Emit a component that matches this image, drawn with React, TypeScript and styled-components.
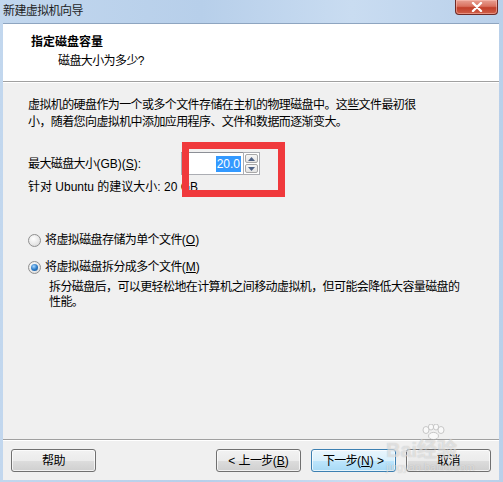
import React from "react";
import styled, { createGlobalStyle } from "styled-components";

const Global = createGlobalStyle`
  html, body { margin: 0; padding: 0; }
  body {
    font-family: "Liberation Sans", "Noto Sans CJK SC", sans-serif;
    font-size: 12px;
    color: #000;
  }
`;

const Window = styled.div`
  position: relative;
  width: 503px;
  height: 482px;
  box-sizing: border-box;
  display: flex;
  flex-direction: column;
  background: linear-gradient(90deg, #c2d7ee 0%, #b7cfea 40%, #c9dcf1 70%, #b9d0ea 100%);
  padding: 0 4px 2px 3px;
  overflow: hidden;
  letter-spacing: -0.6px;
  white-space: nowrap;
`;

const TitleBar = styled.div`
  height: 23px;
  display: flex;
  align-items: flex-start;
  justify-content: space-between;
  margin-right: -4px;
`;

const Title = styled.div`
  line-height: 20px;
  font-size: 12px;
  color: #1e1e1e;
  padding-top: 1px;
`;

const CloseButton = styled.div`
  width: 43px;
  height: 15px;
  margin-right: 5px;
  box-sizing: border-box;
  border: 1px solid #6e2a26;
  border-top: none;
  border-radius: 0 0 4px 4px;
  background: linear-gradient(180deg, #e8a093 0%, #d9715f 45%, #c13f2a 55%, #d0604a 100%);
  display: flex;
  align-items: center;
  justify-content: center;
  box-shadow: inset 0 0 0 1px rgba(255, 200, 190, 0.5);
`;

const Client = styled.div`
  flex: 1;
  display: flex;
  flex-direction: column;
  background: #f0f0f0;
  border-top: 1px solid #8ea5c0;
`;

const Header = styled.div`
  height: 58px;
  box-sizing: border-box;
  background: #fff;
  border-bottom: 1px solid #a0a0a0;
  box-shadow: 0 1px 0 #ffffff;
  padding: 10px 0 0 28px;
  display: flex;
  flex-direction: column;
  gap: 3px;
`;

const HeaderTitle = styled.div`
  font-weight: bold;
  line-height: 16px;
  letter-spacing: 0;
`;

const HeaderSub = styled.div`
  line-height: 16px;
  padding-left: 27px;
`;

const Body = styled.div`
  flex: 1;
  padding: 15px 25px 0 25px;
  display: flex;
  flex-direction: column;
`;

const Paragraph = styled.div<{ $indent?: number; $mt?: number }>`
  line-height: 17px;
  margin-top: ${(p) => p.$mt ?? 0}px;
  padding-left: ${(p) => p.$indent ?? 0}px;
`;

const Lat = styled.span`
  letter-spacing: 0;
  white-space: pre;
`;

const FieldRow = styled.div`
  display: flex;
  align-items: center;
  margin-top: 21px;
  height: 23px;
`;

const FieldLabel = styled.div`
  width: 153px;
  line-height: 16px;
`;

const Input = styled.div`
  width: 62px;
  height: 23px;
  box-sizing: border-box;
  background: #fff;
  border: 1px solid #abadb3;
  border-top-color: #8c8f96;
  border-right: none;
  display: flex;
  align-items: center;
  justify-content: flex-end;
  padding-right: 2px;
`;

const Selected = styled.span`
  background: #3399ff;
  color: #fff;
  line-height: 16px;
  padding: 0 1px;
  letter-spacing: 0;
`;

const Spinner = styled.div`
  width: 17px;
  height: 23px;
  box-sizing: border-box;
  border: 1px solid #abadb3;
  background: #fff;
  display: flex;
  flex-direction: column;
  gap: 1px;
  padding: 1px;
`;

const SpinButton = styled.div`
  flex: 1;
  box-sizing: border-box;
  border: 1px solid #a8a8a8;
  border-radius: 2px;
  background: linear-gradient(180deg, #f6f6f6 0%, #e3e3e3 100%);
  display: flex;
  align-items: center;
  justify-content: center;
`;

const Line = styled.div<{ $mt?: number; $plain?: boolean }>`
  line-height: 16px;
  margin-top: ${(p) => p.$mt ?? 0}px;
  letter-spacing: ${(p) => (p.$plain ? "0" : "inherit")};
`;

const DescLine = styled.div`
  line-height: 15px;
`;

const RadioRow = styled.label<{ $mt: number }>`
  display: flex;
  align-items: center;
  gap: 4px;
  line-height: 16px;
  margin-top: ${(p) => p.$mt}px;
`;

const RadioCircle = styled.span<{ $checked?: boolean }>`
  width: 13px;
  height: 13px;
  box-sizing: border-box;
  border-radius: 50%;
  border: 1px solid #8f8f8f;
  background: radial-gradient(circle at 40% 35%, #ffffff 0%, #e6e6e6 60%, #cfcfcf 100%);
  display: flex;
  align-items: center;
  justify-content: center;
  &::after {
    content: "";
    display: ${(p) => (p.$checked ? "block" : "none")};
    width: 7px;
    height: 7px;
    border-radius: 50%;
    background: radial-gradient(circle at 40% 35%, #a8d8ff 0%, #2d7cc8 50%, #134f8d 100%);
  }
`;

const U = styled.span`
  text-decoration: underline;
  letter-spacing: 0;
`;

const Footer = styled.div`
  border-top: 1px solid #a0a0a0;
  box-shadow: inset 0 1px 0 #ffffff;
  padding: 9px 8px 8px 8px;
  display: flex;
  justify-content: space-between;
`;

const ButtonGroup = styled.div`
  display: flex;
  gap: 10px;
`;

const Button = styled.div<{ $default?: boolean }>`
  width: 85px;
  height: 23px;
  box-sizing: border-box;
  border: 1px solid ${(p) => (p.$default ? "#3c7fb1" : "#707070")};
  border-radius: 3px;
  background: ${(p) =>
    p.$default
      ? "linear-gradient(180deg, #eaf6fd 0%, #d9f0fc 50%, #bee6fd 51%, #a7d9f5 100%)"
      : "linear-gradient(180deg, #f2f2f2 0%, #ebebeb 50%, #dddddd 51%, #cfcfcf 100%)"};
  box-shadow: inset 0 0 0 1px rgba(255, 255, 255, 0.7);
  display: flex;
  align-items: center;
  justify-content: center;
  line-height: 16px;
`;

const Annotation = styled.div`
  position: absolute;
  left: 182px;
  top: 142px;
  width: 103px;
  height: 55px;
  box-sizing: border-box;
  border: 7px solid #f0393c;
  pointer-events: none;
`;

const Watermark = styled.div`
  position: absolute;
  left: 386px;
  top: 424px;
  display: flex;
  flex-direction: column;
  align-items: flex-start;
  pointer-events: none;
  color: rgba(255, 255, 255, 0.5);
  text-shadow: 0 0 1px rgba(110, 110, 110, 0.4);
  letter-spacing: 0;
`;

const WatermarkPaw = styled.svg`
  margin-left: 32px;
  opacity: 0.6;
`;

const WatermarkBrand = styled.div`
  font-size: 20px;
  font-weight: bold;
  line-height: 20px;
`;

const WatermarkUrl = styled.div`
  font-size: 11px;
  line-height: 12px;
  margin-top: 1px;
`;

export default function App() {
  return (
    <>
      <Global />
      <Window>
        <TitleBar>
          <Title>新建虚拟机向导</Title>
          <CloseButton>
            <svg width="12" height="10" viewBox="0 0 12 10">
              <path d="M2 1 L10 9 M10 1 L2 9" stroke="#fff" strokeWidth="2.4" strokeLinecap="round" />
            </svg>
          </CloseButton>
        </TitleBar>
        <Client>
          <Header>
            <HeaderTitle>指定磁盘容量</HeaderTitle>
            <HeaderSub>磁盘大小为多少?</HeaderSub>
          </Header>
          <Body>
            <Paragraph>
              虚拟机的硬盘作为一个或多个文件存储在主机的物理磁盘中。这些文件最初很
              <br />
              小，随着您向虚拟机中添加应用程序、文件和数据而逐渐变大。
            </Paragraph>
            <FieldRow>
              <FieldLabel>
                最大磁盘大小<Lat>(GB)(</Lat>
                <U>S</U>
                <Lat>):</Lat>
              </FieldLabel>
              <Input>
                <Selected>20.0</Selected>
              </Input>
              <Spinner>
                <SpinButton>
                  <svg width="7" height="4" viewBox="0 0 7 4">
                    <path d="M0 4 L3.5 0 L7 4 Z" fill="#4d6185" />
                  </svg>
                </SpinButton>
                <SpinButton>
                  <svg width="7" height="4" viewBox="0 0 7 4">
                    <path d="M0 0 L3.5 4 L7 0 Z" fill="#4d6185" />
                  </svg>
                </SpinButton>
              </Spinner>
            </FieldRow>
            <Line $mt={4} $plain>
              针对 Ubuntu 的建议大小: 20 GB
            </Line>
            <RadioRow $mt={37}>
              <RadioCircle />
              <span>
                将虚拟磁盘存储为单个文件<Lat>(</Lat>
                <U>O</U>
                <Lat>)</Lat>
              </span>
            </RadioRow>
            <RadioRow $mt={11}>
              <RadioCircle $checked />
              <span>
                将虚拟磁盘拆分成多个文件<Lat>(</Lat>
                <U>M</U>
                <Lat>)</Lat>
              </span>
            </RadioRow>
            <Paragraph $indent={21} $mt={5}>
              <DescLine>拆分磁盘后，可以更轻松地在计算机之间移动虚拟机，但可能会降低大容量磁盘的</DescLine>
              <DescLine>性能。</DescLine>
            </Paragraph>
          </Body>
          <Footer>
            <Button>帮助</Button>
            <ButtonGroup>
              <Button>
                <Lat>{"< "}</Lat>上一步<Lat>(</Lat>
                <U>B</U>
                <Lat>)</Lat>
              </Button>
              <Button $default>
                下一步<Lat>(</Lat>
                <U>N</U>
                <Lat>{") >"}</Lat>
              </Button>
              <Button>取消</Button>
            </ButtonGroup>
          </Footer>
        </Client>
        <Annotation />
        <Watermark>
          <WatermarkPaw width="30" height="16" viewBox="0 0 30 16">
            <g fill="#ffffff" stroke="#9a9a9a" strokeWidth="0.8">
              <ellipse cx="8" cy="6" rx="3" ry="3.5" />
              <ellipse cx="13" cy="3" rx="2.6" ry="3" />
              <ellipse cx="18" cy="3" rx="2.6" ry="3" />
              <ellipse cx="23" cy="6" rx="3" ry="3.5" />
              <ellipse cx="15.5" cy="12" rx="5" ry="3.6" />
            </g>
          </WatermarkPaw>
          <WatermarkBrand>Bai经验</WatermarkBrand>
          <WatermarkUrl>jingyan.baidu.com</WatermarkUrl>
        </Watermark>
      </Window>
    </>
  );
}
